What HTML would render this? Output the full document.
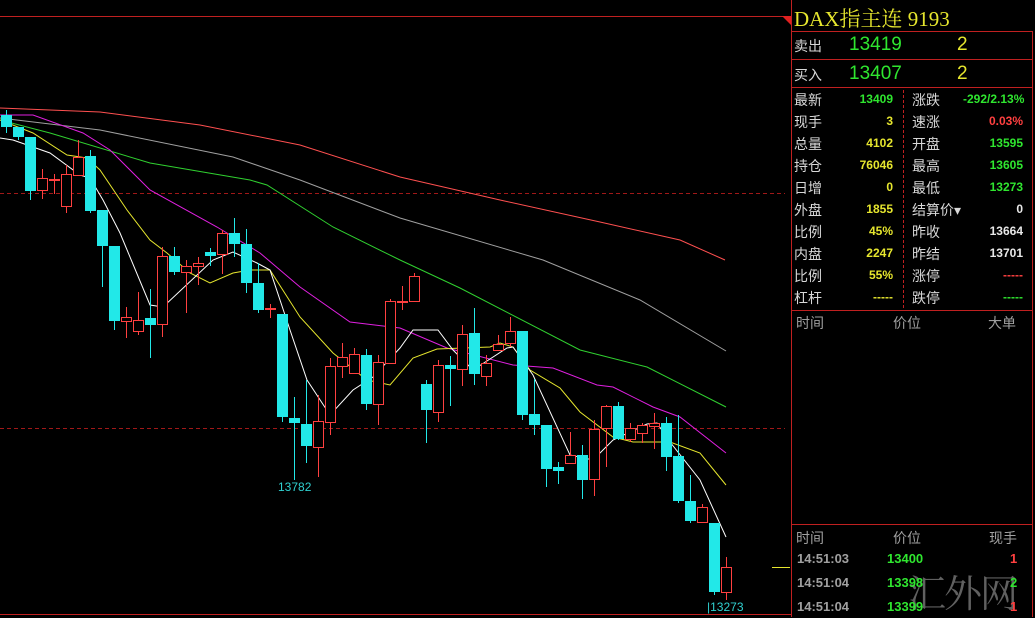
<!DOCTYPE html>
<html><head><meta charset="utf-8"><style>
body{margin:0;background:#000;width:1035px;height:617px;overflow:hidden;position:relative;font-family:"Liberation Sans","Noto Sans CJK SC",sans-serif}
.t{position:absolute;white-space:nowrap}
.l{color:#d8d8d8;font-size:14px}
.y{color:#e6e62e}.g{color:#2fe62f}.r{color:#ff4040}.w{color:#e8e8e8}.gr{color:#a0a0a0}
.v{font-size:12px;font-weight:bold;text-align:right;width:60px}
</style></head><body>
<svg width="1035" height="617" style="position:absolute;left:0;top:0">
<g stroke="#c02020" fill="none">
<line x1="0" y1="16.5" x2="791" y2="16.5"/>
<line x1="791.5" y1="0" x2="791.5" y2="617"/>
<line x1="1032.5" y1="31" x2="1032.5" y2="617"/>
<line x1="791" y1="31.5" x2="1033" y2="31.5"/>
<line x1="791" y1="59.5" x2="1033" y2="59.5"/>
<line x1="791" y1="87.5" x2="1033" y2="87.5"/>
<line x1="791" y1="310.5" x2="1033" y2="310.5"/>
<line x1="791" y1="524.5" x2="1033" y2="524.5"/>
<line x1="0" y1="614.5" x2="791" y2="614.5"/>
<line x1="903.5" y1="90" x2="903.5" y2="308" stroke-dasharray="3,2"/>
<line x1="0" y1="193.5" x2="785" y2="193.5" stroke-dasharray="4,3" stroke="#a01818"/>
<line x1="0" y1="428.5" x2="785" y2="428.5" stroke-dasharray="4,3" stroke="#a01818"/>
</g>
<polygon points="782,16 791,16 791,25" fill="#e02020"/>
<line x1="772" y1="567.5" x2="790" y2="567.5" stroke="#e6e62e"/>
<g fill="none" stroke-width="1">
<polyline stroke="#ff5050" points="0,108 100,112 200,125 300,145 400,177 500,200 600,222 680,240 725,260"/>
<polyline stroke="#a0a0a0" points="0,118 100,130 233,157 300,180 400,218 543,260 640,300 726,351"/>
<polyline stroke="#30d030" points="0,120 50,133 150,163 250,180 267,185 333,227 400,260 460,288 580,350 647,367 726,407"/>
<polyline stroke="#e020e0" points="0,115 33,115 83,133 110,150 150,190 217,227 260,253 300,287 350,322 400,328 447,348 513,365 553,368 597,385 613,387 653,407 680,417 726,453"/>
<polyline stroke="#e6e62e" points="0,120 33,133 67,155 87,158 100,170 127,210 150,240 167,253 190,273 210,283 233,273 250,270 270,270 300,317 333,353 367,380 390,385 413,358 437,349 490,347 500,343 513,347 530,370 560,388 580,412 613,437 633,442 670,442 700,453 726,485"/>
<polyline stroke="#ffffff" points="0,138 13,140 50,153 80,175 90,178 103,200 120,233 150,305 163,307 213,260 233,252 257,263 270,270 290,330 307,380 330,415 353,390 373,377 400,348 413,330 438,330 453,350 473,370 507,348 513,347 533,375 570,455 593,460 613,440 647,424 657,423 670,442 700,480 726,537"/>
</g>
<g id="c"></g>
</svg>
<script>
var d=[
['c',115,127,110,133],['c',127,137,127,140],['c',137,191,137,200],['r',178,190,169,199],['r',179,180,174,194],['r',174,206,165,213],['r',157,175,140,175],['c',156,211,150,213],['c',210,246,210,287],['c',246,321,246,330],
['r',317,321,307,338],['r',320,331,292,335],['c',318,325,289,358],['r',256,324,247,337],['c',256,272,247,275],['r',266,272,260,313],['r',263,266,257,285],['c',252,256,248,266],['r',233,254,230,274],['c',233,244,218,257],
['c',244,283,229,293],['c',283,310,263,313],['r',308,309,304,318],['c',314,417,314,422],['c',418,423,397,480],['c',424,446,380,463],['r',421,447,395,477],['r',366,422,358,435],['r',357,366,343,378],['r',354,373,348,373],
['c',355,404,349,410],['r',362,404,355,425],['r',301,363,299,363],['r',301,302,286,310],['r',276,301,273,301],['c',384,410,380,443],['r',365,412,360,422],['c',365,369,356,406],['r',334,369,325,386],['c',333,374,308,385],
['r',363,376,355,386],['r',344,350,335,351],['r',331,343,317,347],['c',331,415,331,420],['c',414,425,379,435],['c',425,469,425,487],['c',467,471,462,484],['r',455,463,432,464],['c',455,480,445,499],['r',429,479,420,496],
['r',406,428,405,467],['c',406,439,402,440],['r',428,439,423,442],['r',425,433,423,443],['r',423,426,413,449],['c',423,457,417,471],['c',456,501,415,503],['c',501,521,475,523],['r',507,522,504,522],['c',523,592,523,595],['r',567,592,557,600]];
var s='';d.forEach(function(e,i){var x=6+12*i;var col=e[0]=='c'?'#22e8e8':'#ff4040';
s+='<line x1="'+(x+.5)+'" y1="'+e[3]+'" x2="'+(x+.5)+'" y2="'+e[4]+'" stroke="'+col+'"/>';
if(e[0]=='c')s+='<rect x="'+(x-5)+'" y="'+e[1]+'" width="11" height="'+Math.max(1,e[2]-e[1])+'" fill="'+col+'"/>';
else s+='<rect x="'+(x-4.5)+'" y="'+(e[1]+.5)+'" width="10" height="'+Math.max(1,e[2]-e[1])+'" fill="#000" stroke="'+col+'"/>';});
document.getElementById('c').innerHTML=s;
</script>
<div class="t" style="left:278px;top:480px;color:#30d0d0;font-size:12px">13782</div>
<div class="t" style="left:707px;top:600px;color:#30d0d0;font-size:12px">|13273</div>
<div class="t y" style="left:794px;top:3px;font-family:'Liberation Serif','Noto Serif CJK SC',serif;font-size:21px">DAX指主连 9193</div>
<div class="t l" style="left:794px;top:36px">卖出</div><div class="t g" style="left:849px;top:34px;font-size:19px">13419</div><div class="t y" style="left:957px;top:34px;font-size:19px">2</div>
<div class="t l" style="left:794px;top:65px">买入</div><div class="t g" style="left:849px;top:63px;font-size:19px">13407</div><div class="t y" style="left:957px;top:63px;font-size:19px">2</div>
<div id="rows"></div>
<script>
var L=[['最新','13409','g','涨跌','-292/2.13%','g'],['现手','3','y','速涨','0.03%','r'],['总量','4102','y','开盘','13595','g'],['持仓','76046','y','最高','13605','g'],['日增','0','y','最低','13273','g'],['外盘','1855','y','结算价▾','0','w'],['比例','45%','y','昨收','13664','w'],['内盘','2247','y','昨结','13701','w'],['比例','55%','y','涨停','-----','r'],['杠杆','-----','y','跌停','-----','g']];
var h='';L.forEach(function(r,i){var y=90+i*22;
h+='<div class="t l" style="left:794px;top:'+y+'px">'+r[0]+'</div><div class="t v '+r[2]+'" style="left:833px;top:'+(y+2)+'px">'+r[1]+'</div>';
h+='<div class="t l" style="left:912px;top:'+y+'px">'+r[3]+'</div><div class="t v '+r[5]+'" style="left:963px;top:'+(y+2)+'px">'+r[4]+'</div>';});
document.getElementById('rows').innerHTML=h;
</script>
<div class="t gr" style="left:796px;top:313px;font-size:14px">时间</div>
<div class="t gr" style="left:893px;top:313px;font-size:14px">价位</div>
<div class="t gr" style="left:988px;top:313px;font-size:14px">大单</div>
<div class="t gr" style="left:796px;top:528px;font-size:14px">时间</div>
<div class="t gr" style="left:893px;top:528px;font-size:14px">价位</div>
<div class="t gr" style="left:989px;top:528px;font-size:14px">现手</div>
<div class="t" style="left:908px;top:563px;color:#606060;font-family:'Noto Serif CJK SC',serif;font-size:38px;letter-spacing:-2px">汇外网</div>
<div class="t gr" style="left:797px;top:551px;font-size:13px;font-weight:bold">14:51:03</div><div class="t g" style="left:887px;top:551px;font-size:13px;font-weight:bold">13400</div><div class="t r" style="left:1010px;top:551px;font-size:13px;font-weight:bold">1</div>
<div class="t gr" style="left:797px;top:575px;font-size:13px;font-weight:bold">14:51:04</div><div class="t g" style="left:887px;top:575px;font-size:13px;font-weight:bold">13398</div><div class="t g" style="left:1010px;top:575px;font-size:13px;font-weight:bold">2</div>
<div class="t gr" style="left:797px;top:599px;font-size:13px;font-weight:bold">14:51:04</div><div class="t g" style="left:887px;top:599px;font-size:13px;font-weight:bold">13399</div><div class="t r" style="left:1010px;top:599px;font-size:13px;font-weight:bold">1</div>
</body></html>
